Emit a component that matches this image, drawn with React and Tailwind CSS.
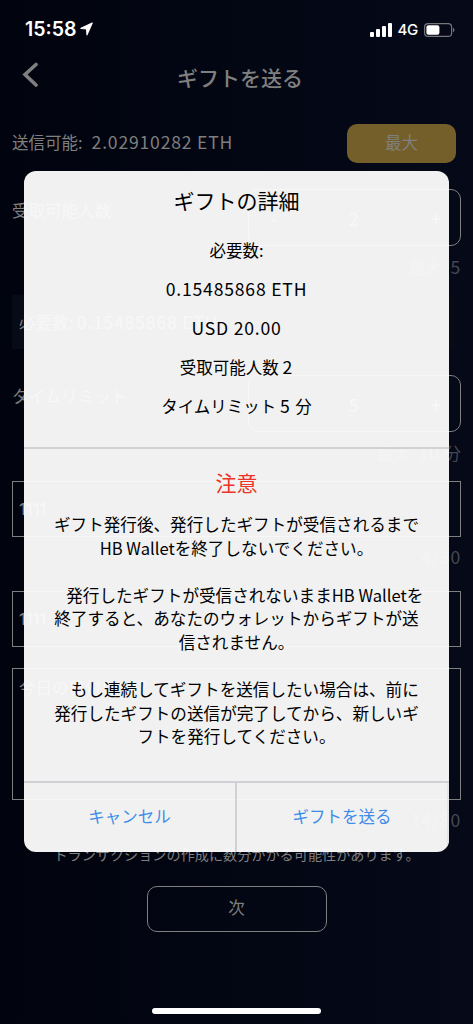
import { Fragment } from 'react'

const details = ['必要数:', '0.15485868 ETH', 'USD 20.00', '受取可能人数 2', 'タイムリミット 5 分']

const warnings = [
  ['ギフト発行後、発行したギフトが受信されるまで', 'HB Walletを終了しないでください。'],
  ['\u3000発行したギフトが受信されないままHB Walletを', '終了すると、あなたのウォレットからギフトが送', '信されません。'],
  ['\u3000もし連続してギフトを送信したい場合は、前に', '発行したギフトの送信が完了してから、新しいギ', 'フトを発行してください。'],
]

// Latin letters and digits are set a little larger and wider than the kana
function Mixed({ text }) {
  return text.split(/([0-9A-Z][0-9A-Za-z./ ]*)/).map((part, i) =>
    i % 2 ? (
      <span key={i} className="text-[17.6px] tracking-[0.8px]">{part}</span>
    ) : (
      <Fragment key={i}>{part}</Fragment>
    )
  )
}

function StatusBar() {
  return (
    <div className="flex h-[52px] items-start justify-between pl-[25px] pr-[18px] pt-[17px] text-white">
      <div className="flex items-center font-['Inter'] text-[19.5px] font-semibold leading-6">
        15:58
        <svg className="ml-1" width="13" height="14" viewBox="0 0 13 14" fill="currentColor" stroke="currentColor" strokeWidth="1.2" strokeLinejoin="round">
          <path d="M12.2 1 1 6.4l5.6.6.4 5.8Z" />
        </svg>
      </div>
      <div className="flex items-center pt-px">
        <svg width="22" height="14" viewBox="0 0 22 14" fill="currentColor">
          <rect x="0" y="9" width="4" height="5" rx="1" />
          <rect x="6" y="6" width="4" height="8" rx="1" />
          <rect x="12" y="3" width="4" height="11" rx="1" />
          <rect x="18" y="0" width="4" height="14" rx="1" />
        </svg>
        <span className="ml-[6px] font-['Inter'] text-[15px] font-medium leading-6 tracking-[-0.3px]">4G</span>
        <svg className="ml-[6px]" width="31" height="14" viewBox="0 0 31 14">
          <rect x=".6" y=".6" width="27" height="12.8" rx="3.5" fill="none" stroke="#74767c" strokeWidth="1.2" />
          <rect x="2.4" y="2.2" width="13" height="9.6" rx="2" fill="#fff" />
          <path d="M29 4.8c2 .8 2 3.6 0 4.4Z" fill="#74767c" />
        </svg>
      </div>
    </div>
  )
}

function Stepper({ label, value, limit }) {
  return (
    <div className="h-[106px]">
      <div className="flex justify-between">
        <span className="pt-[9px]">{label}</span>
        <div className="flex h-[57px] w-[213px] items-center justify-between rounded-[10px] border-[1.5px] border-[#7f7f7f] pl-[22px] pr-[18px] text-[18px]">
          <span>-</span>
          <span>{value}</span>
          <span className="text-[21px]">+</span>
        </div>
      </div>
      <p className="pt-[9px] text-right text-[#454750]">
        <Mixed text={limit} />
      </p>
    </div>
  )
}

function GiftForm() {
  return (
    <div className="px-3 text-[16.5px] leading-6 text-[#7f7f7f]">
      <div className="flex h-[65px] justify-between">
        <div className="flex gap-[9px] pt-[6px]">
          <span>送信可能:</span>
          <span><Mixed text="2.02910282 ETH" /></span>
        </div>
        <button className="mr-[5px] h-[39px] w-[109px] rounded-[10px] bg-[#745f2b] pb-[3px]">最大</button>
      </div>
      <Stepper label="受取可能人数" value="2" limit="最大: 5" />
      <div className="mr-1 flex h-[54px] items-center bg-[#070b17] pl-[7px]">
        <p><Mixed text="必要数: 0.15485868 ETH" /></p>
      </div>
      <div className="h-[26px]" />
      <Stepper label="タイムリミット" value="5" limit="最大: 10 分" />
      <div className="flex h-[56px] items-center border border-[#7f7f7f] px-[6px] font-['Inter'] font-medium">1111</div>
      <p className="h-[54px] pt-[8px] text-right text-[#454750]"><Mixed text="4/30" /></p>
      <div className="flex h-[56px] items-center border border-[#7f7f7f] px-[6px] font-['Inter'] font-medium">1111</div>
      <div className="mt-[21px] h-[132px] border border-[#7f7f7f] px-[6px] pt-[6px]">今日の日付いつ？</div>
      <p className="h-[42px] pt-[8px] text-right text-[#454750]"><Mixed text="14/80" /></p>
      <p className="text-center text-[14.15px]">トランザクションの作成に数分かかる可能性があります。</p>
      <button className="mx-auto mt-[19.5px] block h-[46px] w-[180px] rounded-[10px] border-[1.5px] border-[#7f7f7f] pb-[3px]">次</button>
    </div>
  )
}

function GiftDialog() {
  return (
    <div className="absolute left-6 top-[171px] flex h-[681px] w-[425px] flex-col overflow-hidden rounded-[12px] bg-[#fefefe]/95 text-center text-[16.5px] text-black">
      <div className="h-[276px] pt-[14px]">
        <h2 className="mb-[23px] text-[21px] leading-[30px]">ギフトの詳細</h2>
        <div className="flex flex-col gap-[15px] leading-6">
          {details.map((line) => (
            <p key={line}><Mixed text={line} /></p>
          ))}
        </div>
      </div>
      <div className="h-[334px] border-t-2 border-[#d0d0d5] pt-[18px]">
        <h2 className="mb-4 text-[21px] leading-[30px] text-[#ee3426]">注意</h2>
        <div className="flex flex-col gap-[23.6px] whitespace-nowrap text-[16.6px] leading-[23.6px]">
          {warnings.map((lines) => (
            <div key={lines[0]}>
              {lines.map((line) => (
                <p key={line}>{line}</p>
              ))}
            </div>
          ))}
        </div>
      </div>
      <div className="flex flex-1 border-t-2 border-[#d0d0d5] text-[#3d8de8]">
        <button className="w-[213px] border-r-2 border-[#d0d0d5] pb-[3px]">キャンセル</button>
        <button className="flex-1 border-r-2 border-[#e4e4e8] pb-[3px]">ギフトを送る</button>
      </div>
    </div>
  )
}

export default function App() {
  return (
    <div className="relative h-[1024px] w-[473px] overflow-hidden bg-linear-to-r from-[#01040e] to-[#060918] font-['Noto_Sans_CJK_JP',sans-serif]">
      <StatusBar />
      <header className="relative flex h-[72px] justify-center pl-[7px] pt-[10px] text-[#7f7f7f]">
        <svg className="absolute left-[22px] top-[10px]" width="17" height="26" viewBox="0 0 17 26" fill="none" stroke="currentColor" strokeWidth="3.6" strokeLinecap="round">
          <path d="M14 2.5 3 12.5l11 10.5" />
        </svg>
        <h1 className="text-[21px] font-medium leading-[30px]">ギフトを送る</h1>
      </header>
      <GiftForm />
      <GiftDialog />
      <div className="absolute bottom-[10px] left-[152px] h-[6px] w-[169px] rounded-full bg-white" />
    </div>
  )
}
